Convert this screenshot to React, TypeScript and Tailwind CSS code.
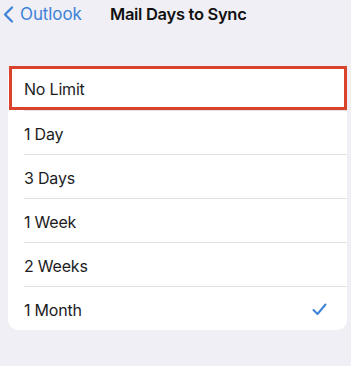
import { useState } from 'react';

const options = ['No Limit', '1 Day', '3 Days', '1 Week', '2 Weeks', '1 Month'];

export default function App() {
  const [selected, setSelected] = useState('1 Month');

  return (
    <div className="w-[351px] h-[366px] bg-[#f0eff5] overflow-hidden" style={{ fontFamily: 'Inter, "Liberation Sans", sans-serif' }}>
      {/* Nav bar */}
      <div className="relative h-[28px] flex items-center">
        <button className="flex items-center gap-[6px] pl-[3px] text-[#3d82d8]">
          <svg width="11" height="17" viewBox="0 0 11 17" fill="none">
            <path d="M9 1.5L2 8.5L9 15.5" stroke="currentColor" strokeWidth="2.2" strokeLinecap="round" strokeLinejoin="round" />
          </svg>
          <span className="text-[17px] leading-none tracking-[-0.1px]">Outlook</span>
        </button>
        <h1 className="absolute left-[110px] top-0 h-[28px] flex items-center text-[16.5px] font-semibold text-[#111] tracking-[-0.3px]">
          Mail Days to Sync
        </h1>
      </div>

      {/* Options */}
      <div className="relative mt-[38px] ml-[8px] mr-[4px] bg-white rounded-[10px]">
        {options.map((o, i) => (
          <div key={o} onClick={() => setSelected(o)} className="flex h-[44px] pl-[16px]">
            <div className={`flex-1 flex items-center justify-between pr-[20px] pt-[2px] ${i > 0 ? 'border-t border-[#e2e2e6]' : ''}`}>
              <span className="text-[16px] text-[#1c1c1e] tracking-[-0.2px]">{o}</span>
              {selected === o && (
                <svg width="15" height="13" viewBox="0 0 15 13" fill="none">
                  <path d="M1.5 7L5.5 11L13.5 1.5" stroke="#3d82d8" strokeWidth="2" strokeLinecap="round" strokeLinejoin="round" />
                </svg>
              )}
            </div>
          </div>
        ))}
        <div className="absolute left-[1px] top-0 w-[338px] h-[44px] border-[3.5px] border-[#d9432b] pointer-events-none" />
      </div>
    </div>
  );
}
